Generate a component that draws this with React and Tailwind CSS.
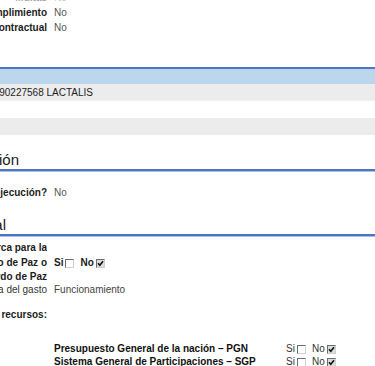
import React from "react";

const font = { fontFamily: '"Liberation Sans", Arial, sans-serif' };

function Box({ checked }) {
  return (
    <span className={"inline-flex items-center justify-center w-[9px] h-[9px] border border-t-[#6b6b6b] border-l-[#6b6b6b] border-r-[#d0d0d0] border-b-[#d0d0d0] align-middle mx-[2px] relative top-[1px] " + (checked ? "bg-[#dcdcdc]" : "bg-white")}>
      {checked ? (
        <svg width="7" height="7" viewBox="0 0 7 7" className="block">
          <path d="M1 3.2 L2.8 5.2 L6 1.2" stroke="#111" strokeWidth="1.6" fill="none" />
        </svg>
      ) : null}
    </span>
  );
}

function Label({ children, bold = true, className = "" }) {
  return (
    <div className={"w-[47px] shrink-0 flex justify-end overflow-hidden whitespace-nowrap " + (bold ? "font-bold text-[#1c1c1c] " : "") + className}>
      <span>{children}</span>
    </div>
  );
}

function Heading({ children, widthClass }) {
  return (
    <div className="border-b-2 border-[#4a74c4] shadow-[0_1px_0_#a8c0e6]">
      <div className={widthClass + " flex justify-end overflow-hidden whitespace-nowrap text-[15px] text-[#1a1a1a] leading-[18px]"}>
        <span>{children}</span>
      </div>
    </div>
  );
}

export default function App() {
  return (
    <div style={font} className="w-[375px] h-[366px] overflow-hidden bg-white text-[10px] leading-[15px] text-[#333]">
      <div className="-mt-[10px]">
        <div className="flex h-[15px] items-center opacity-40">
          <Label>Multas</Label>
          <span className="ml-[7px] text-[#666]">No</span>
        </div>
        <div className="flex h-[15px] items-center">
          <Label>Sanciones por incumplimiento</Label>
          <span className="ml-[7px] text-[#555]">No</span>
        </div>
        <div className="flex h-[15px] items-center">
          <Label>Liquidación contractual</Label>
          <span className="ml-[7px] text-[#555]">No</span>
        </div>
      </div>

      <div className="mt-[32px] border-t-2 border-[#4d77c4] bg-[#bcd6ee] h-[17px]" />
      <div className="bg-[#ececec] h-[17px] flex items-center">
        <div className="w-[93px] flex justify-end overflow-hidden whitespace-nowrap text-[#1e1e1e]">
          <span>890227568 LACTALIS</span>
        </div>
      </div>
      <div className="bg-white h-[17px]" />
      <div className="bg-[#ececec] h-[17px]" />

      <div className="mt-[16px]">
        <Heading widthClass="w-[19px]">Información de ejecución</Heading>
      </div>
      <div className="flex h-[15px] items-center mt-[14px]">
        <Label>¿Se encuentra en ejecución?</Label>
        <span className="ml-[7px] text-[#555]">No</span>
      </div>

      <div className="mt-[16px]">
        <Heading widthClass="w-[6px]">Información Presupuestal</Heading>
      </div>

      <div className="flex mt-[5px]">
        <div className="w-[47px] shrink-0 font-bold text-[#1c1c1c] leading-[14.5px]">
          <div className="flex justify-end overflow-hidden whitespace-nowrap"><span>¿El contrato se enmarca para la</span></div>
          <div className="flex justify-end overflow-hidden whitespace-nowrap"><span>implementación del Acuerdo de Paz o</span></div>
          <div className="flex justify-end overflow-hidden whitespace-nowrap"><span>Plan Marco del Acuerdo de Paz</span></div>
        </div>
        <div className="ml-[7px] flex items-center font-bold text-[#1c1c1c]">
          <span>Si</span>
          <Box />
          <span className="ml-[4px]">No</span>
          <Box checked />
        </div>
      </div>

      <div className="flex h-[15px] items-center -mt-[3px]">
        <Label bold={false} className="text-[#333]">Naturaleza del gasto</Label>
        <span className="ml-[7px] text-[#444]">Funcionamiento</span>
      </div>

      <div className="flex h-[15px] items-center mt-[10px]">
        <Label>Origen de los recursos:</Label>
      </div>

      <div className="mt-[20px] pl-[54px] font-bold text-[#111] leading-[13px]">
        <div className="flex items-center">
          <span className="w-[232px]">Presupuesto General de la nación – PGN</span>
          <span className="font-normal text-[#333]">Si</span>
          <Box />
          <span className="font-normal text-[#333] ml-[4px]">No</span>
          <Box checked />
        </div>
        <div className="flex items-center">
          <span className="w-[232px]">Sistema General de Participaciones – SGP</span>
          <span className="font-normal text-[#333]">Si</span>
          <Box />
          <span className="font-normal text-[#333] ml-[4px]">No</span>
          <Box checked />
        </div>
      </div>
    </div>
  );
}
